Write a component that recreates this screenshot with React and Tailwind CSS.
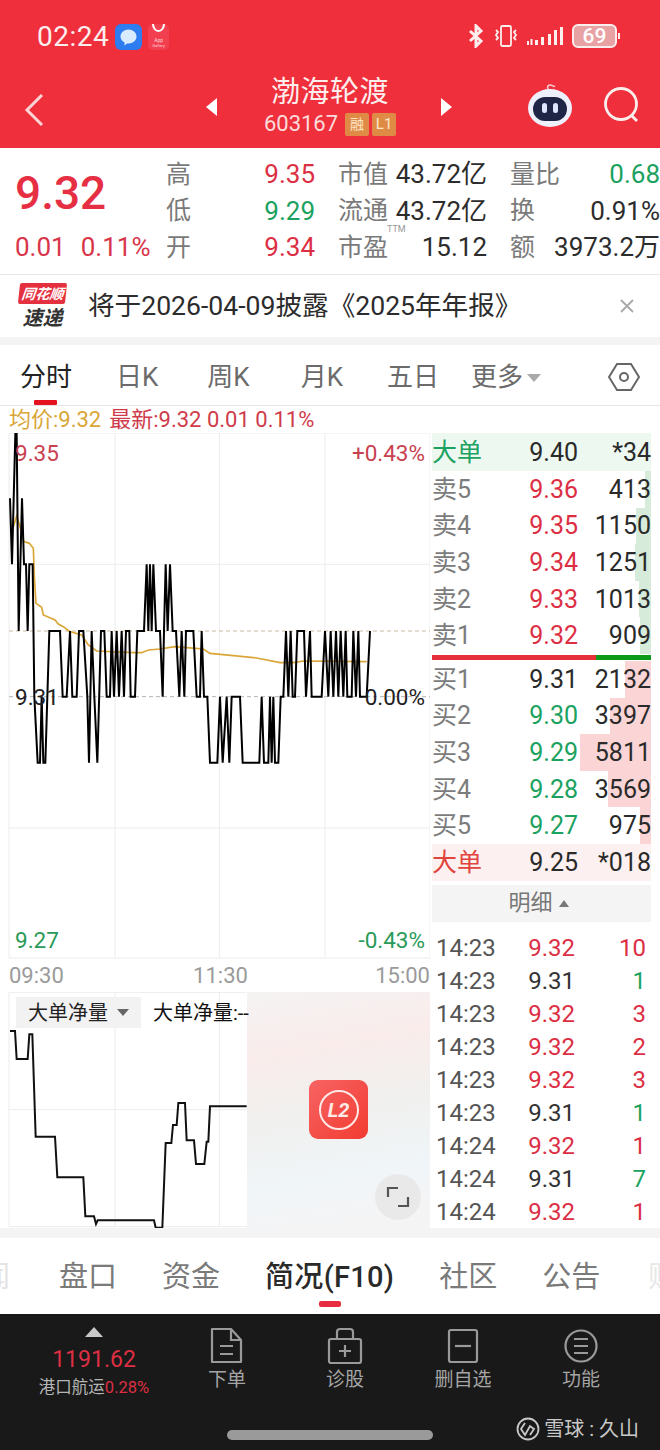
const FONT = { fontFamily: 'Roboto, "Noto Sans CJK SC", sans-serif' };
const L = { a: 12, b: 205, c: 403, d: 603, e: 800, f: 998 };
const priceRaw = "30b 36c 46a 50a 56d 66b 72c 78c 83d 88c 98c 103e 113f 120f 125e 130f 136f 148d 180d 188e 200e 210d 217e 230e 237d 250d 262e 267f 275d 283e 292f 303d 313d 320e 330e 335d 342e 350d 357e 365d 372e 378d 388d 392e 405e 412d 432d 440c 445d 450c 455d 460c 468d 480d 488e 492d 497c 503d 510c 518d 528d 538e 545d 553e 558d 572d 580d 590e 600e 605d 612e 622e 630f 652f 660e 668f 680e 688f 695e 720e 728f 735f 778f 785e 792f 805f 810e 815f 820e 825f 835f 842e 850e 858d 865e 872d 878e 885e 892d 912d 918e 930d 935e 965e 975d 985e 992d 1000e 1008d 1015e 1022d 1030e 1037d 1042e 1055e 1060d 1068e 1075d 1080e 1100e 1110d";
const pricePts = priceRaw.split(" ").map((s) => `${parseInt(s)},${L[s.slice(-1)]}`).join(" ");
const avgPts = "40,290 50,258 60,290 72,335 88,340 100,355 103,440 108,520 125,532 130,555 165,570 175,582 190,590 210,605 245,615 265,645 290,663 400,668 425,668 445,660 480,657 525,650 560,653 610,657 630,670 700,677 770,684 840,698 880,698 910,693 1100,695";
const flowPts = "30,213 45,213 50,297 83,297 88,223 97,223 107,530 165,530 172,652 250,652 256,769 282,769 288,792 293,781 462,781 467,803 487,803 497,549 514,549 519,495 530,495 535,429 555,429 560,541 582,541 588,612 613,612 620,545 625,545 630,439 740,439";

const quote = [
  [["高", "9.35", "text-[#dc2f44]"], ["市值", "43.72亿", "text-[#2c2c2c]"], ["量比", "0.68", "text-[#1ba260]"]],
  [["低", "9.29", "text-[#1ba260]"], ["流通", "43.72亿", "text-[#2c2c2c]"], ["换", "0.91%", "text-[#2c2c2c]"]],
  [["开", "9.34", "text-[#dc2f44]"], ["市盈", "15.12", "text-[#2c2c2c]"], ["额", "3973.2万", "text-[#2c2c2c]"]],
];
const sell = [["卖5", "9.36", "413", 6], ["卖4", "9.35", "1150", 15], ["卖3", "9.34", "1251", 16], ["卖2", "9.33", "1013", 12], ["卖1", "9.32", "909", 11]];
const buy = [["买1", "9.31", "2132", 26, "text-[#2a2a2a]"], ["买2", "9.30", "3397", 41, "text-[#1ba260]"], ["买3", "9.29", "5811", 71, "text-[#1ba260]"], ["买4", "9.28", "3569", 43, "text-[#1ba260]"], ["买5", "9.27", "975", 11, "text-[#1ba260]"]];
const ticks = [["9.32", "10", 1], ["9.31", "1", 0], ["9.32", "3", 1], ["9.32", "2", 1], ["9.32", "3", 1], ["9.31", "1", 0], ["9.32", "1", 1], ["9.31", "7", 0], ["9.32", "1", 1]];

function BookRow({ label, price, vol, bar, barCls, priceCls }) {
  return (
    <div className="relative flex h-[36.6px] items-center text-[25px] leading-none">
      <div className={`absolute right-0 top-0 h-full ${barCls}`} style={{ width: bar }} />
      <span className="relative w-[88px] text-[#7c7c7c]">{label}</span>
      <span className={`relative w-[58px] text-right ${priceCls}`}>{price}</span>
      <span className="relative flex-1 text-right text-[#2a2a2a]">{vol}</span>
    </div>
  );
}

function ActionItem({ icon, label }) {
  return (
    <div className="flex w-[118px] flex-col items-center">
      <svg width="36" height="38" viewBox="0 0 36 38" fill="none" stroke="#9a9a9a" strokeWidth="2.2">{icon}</svg>
      <span className="mt-[3px] text-[19px] leading-[24px] text-[#a5a5a5]">{label}</span>
    </div>
  );
}

export default function App() {
  return (
    <div className="flex h-[1450px] w-[660px] flex-col overflow-hidden bg-white" style={FONT}>
      {/* Red header */}
      <header className="h-[148px] shrink-0 bg-[#ef2f3b] text-white">
        <div className="flex h-[73px] items-start justify-between pl-[37px] pr-[40px] pt-[21px]">
          <div className="flex items-center">
            <span className="text-[28px] leading-[32px] tracking-[0.5px] text-[#fdeeee]">02:24</span>
            <div className="ml-[6px] flex h-[26px] w-[27px] items-center justify-center rounded-[6px] bg-[#2d7cf0]">
              <svg width="19" height="19" viewBox="0 0 19 19"><path d="M9.5 1.5c4.4 0 8 3 8 7s-3.6 7-8 7c-.5 0-1 0-1.500-.1l-2.500 2.100v-3C3 13.200 1.500 11 1.500 8.500c0-4 3.600-7 8-7z" fill="#d9ecff" /></svg>
            </div>
            <div className="relative ml-[6px] flex h-[26px] w-[21px] flex-col items-center justify-end rounded-[5px] bg-[#f23f4f] pb-[2px]">
              <svg className="absolute left-[4px] top-0" width="13" height="9" viewBox="0 0 13 9" fill="none" stroke="#fff" strokeWidth="2"><path d="M1 0c0 4 2.500 7 5.500 7S12 4 12 0" /></svg>
              <span className="text-[5px] leading-[6px] text-[#ffd9dc]">App</span>
              <span className="text-[4px] leading-[5px] text-[#ffd9dc]">Gallery</span>
            </div>
          </div>
          <div className="mt-[3px] flex items-center">
            <svg width="16" height="24" viewBox="0 0 16 24" fill="none" stroke="#fdeeee" strokeWidth="3"><path d="M2 7l11 10-5 5V2l5 5L2 17" /></svg>
            <svg className="ml-[9px]" width="26" height="24" viewBox="0 0 26 24" fill="none" stroke="#fdeeee" strokeWidth="1.800"><rect x="8" y="2" width="10" height="20" rx="1.500" /><path d="M3 6l2 2-2 3 2 3-2 2M23 6l-2 2 2 3-2 3 2 2" /></svg>
            <svg className="ml-[8px]" width="40" height="24" viewBox="0 0 40 24" fill="#fdeeee"><rect x="0" y="17" width="2" height="4" /><rect x="3.500" y="15" width="2" height="6" /><rect x="8" y="16" width="3" height="5" /><rect x="14" y="13" width="3" height="8" /><rect x="21" y="10" width="3" height="11" /><rect x="27" y="6" width="3" height="15" /><rect x="33" y="3" width="3" height="18" /></svg>
            <div className="ml-[5px] flex h-[24px] w-[45px] items-center justify-center rounded-[6px] border-2 border-[#fdeeee] bg-[#e8a2a4] text-[21px] font-medium leading-none text-white">69</div>
            <div className="ml-[1px] h-[6px] w-[2px] bg-[#fdeeee]" />
          </div>
        </div>
        <div className="flex h-[75px] items-start">
          <svg className="ml-[21px] mt-[19px]" width="26" height="36" viewBox="0 0 26 36" fill="none" stroke="#fbd5d5" strokeWidth="3"><path d="M21 3L6 18l15 15" /></svg>
          <div className="ml-[159px] mt-[25px] h-0 w-0 border-y-[9px] border-r-[11px] border-y-transparent border-r-white" />
          <div className="ml-[45px] flex w-[136px] flex-col items-center">
            <span className="whitespace-nowrap text-[29px] leading-[38px] tracking-[0.500px] text-[#fdeeee]">渤海轮渡</span>
            <div className="mt-[1px] flex items-center whitespace-nowrap">
              <span className="text-[22px] leading-[24px] text-[#fbdcdc]">603167</span>
              <span className="ml-[7px] flex h-[23px] w-[24px] items-center justify-center rounded-[2px] bg-[#e08b45] text-[14px] text-[#fde6c8]">融</span>
              <span className="ml-[3px] flex h-[23px] w-[24px] items-center justify-center rounded-[2px] bg-[#e08b45] text-[15px] text-[#fde6c8]">L1</span>
            </div>
          </div>
          <div className="ml-[43px] mt-[25px] h-0 w-0 border-y-[9px] border-l-[11px] border-y-transparent border-l-white" />
          <svg className="ml-[73px] mt-[6px]" width="50" height="50" viewBox="0 0 50 50">
            <path d="M24 11c-2-1-2-5 1-5s3 2 5 1" fill="none" stroke="#f8c9cf" strokeWidth="1.600" />
            <ellipse cx="25" cy="29" rx="22" ry="19" fill="#eef0fb" />
            <rect x="8" y="18" width="34" height="24" rx="12" fill="#1f2544" />
            <rect x="17" y="24" width="5" height="10" rx="2.500" fill="#dfe6ff" />
            <rect x="28" y="24" width="5" height="10" rx="2.500" fill="#dfe6ff" />
          </svg>
          <svg className="ml-[26px] mt-[11px]" width="44" height="44" viewBox="0 0 44 44" fill="none" stroke="#fdeeee" strokeWidth="2.800"><circle cx="20" cy="20" r="15.500" /><path d="M30 31l6 6" /></svg>
        </div>
      </header>

      {/* Quote */}
      <section className="flex h-[127px] shrink-0 border-b border-[#e8e8e8] pt-[8px]">
        <div className="w-[166px] shrink-0 pl-[15px]">
          <div className="mt-[12px] text-[46px] font-medium leading-[50px] text-[#e62f43]">9.32</div>
          <div className="mt-[14px] flex gap-[15px] text-[26px] leading-[30px] text-[#d93549]"><span>0.01</span><span>0.11%</span></div>
        </div>
        <div className="flex flex-1 flex-col">
          {quote.map((row, i) => (
            <div key={i} className="grid h-[36.5px] grid-cols-[149px_149px_150px] items-center gap-x-[23px] text-[26px] leading-none">
              {row.map(([k, v, c], j) => (
                <div key={j} className="flex items-center justify-between whitespace-nowrap">
                  <span className="relative text-[25px] text-[#7a7a7a]">{k}{k === "市盈" && <sup className="absolute left-[49px] top-[-6px] text-[9px] text-[#999]">TTM</sup>}</span>
                  <span className={c}>{v}</span>
                </div>
              ))}
            </div>
          ))}
        </div>
      </section>

      {/* Notice */}
      <section className="flex h-[62px] shrink-0 items-center pl-[19px]">
        <div className="flex w-[47px] flex-col items-center">
          <span className="flex h-[21px] w-[47px] -skew-x-6 items-center justify-center rounded-[2px] bg-[#e5303f] text-[14px] font-bold italic leading-none text-white">同花顺</span>
          <span className="mt-[3px] text-[20px] font-bold italic leading-[22px] text-[#333]">速递</span>
        </div>
        <span className="ml-[22px] whitespace-nowrap text-[26.6px] leading-none text-[#2c2c2c]">将于2026-04-09披露《2025年年报》</span>
        <svg className="ml-auto mr-[25px]" width="16" height="16" viewBox="0 0 16 16" stroke="#a8a8a8" strokeWidth="1.800"><path d="M2 2l12 12M14 2L2 14" /></svg>
      </section>
      <div className="h-[8px] shrink-0 bg-[#f4f4f4]" />

      {/* Chart tabs */}
      <nav className="relative flex h-[61px] shrink-0 items-center border-b border-[#e5e5e5] pt-[3px] text-[26px] leading-none text-[#6b6b6b]">
        <span className="absolute left-[20px] top-[19px] text-[#222]">分时</span>
        <span className="absolute bottom-[0px] left-[34px] h-[5px] w-[23px] rounded-[1px] bg-[#e5131f]" />
        <span className="ml-[116px]">日K</span>
        <span className="ml-[49px]">周K</span>
        <span className="ml-[51px]">月K</span>
        <span className="ml-[44px]">五日</span>
        <span className="ml-[32px]">更多</span>
        <span className="ml-[4px] mt-[3px] h-0 w-0 border-x-[7px] border-t-[8px] border-x-transparent border-t-[#aaa]" />
        <svg className="ml-auto mr-[20px]" width="32" height="32" viewBox="0 0 32 32" fill="none" stroke="#666" strokeWidth="2"><path d="M9 3h14l8 13-8 13H9L1 16z" /><circle cx="16" cy="16" r="4" /></svg>
      </nav>

      {/* Info line */}
      <div className="flex h-[27px] shrink-0 items-center pl-[9px] text-[22px] leading-none">
        <span className="text-[#d9a637]">均价:9.32</span>
        <span className="ml-[8px] text-[#cf3b4a]">最新:9.32 0.01 0.11%</span>
      </div>

      {/* Main */}
      <main className="flex h-[795px] shrink-0">
        <div className="w-[430px] shrink-0">
          <div className="relative h-[527px]">
            <svg className="absolute inset-0" width="430" height="527" viewBox="0 9 1290 1581" fill="none">
              <path d="M27 9V1584H1290V9H27M345 9V1584M658 9V1584M975 9V1584M27 403H1290M27 1194H1290" stroke="#ececec" strokeWidth="3" />
              <path d="M27 603H1290" stroke="#c9b9a0" strokeWidth="3" strokeDasharray="12 9" />
              <path d="M27 800H1290" stroke="#b5b5b5" strokeWidth="3" strokeDasharray="12 9" />
              <polyline points={avgPts} stroke="#d9a637" strokeWidth="5" />
              <polyline points={pricePts} stroke="#000" strokeWidth="6" strokeLinejoin="miter" />
            </svg>
            <span className="absolute left-[15px] top-[8px] text-[22.5px] leading-[24px] text-[#c8414f]">9.35</span>
            <span className="absolute right-[5px] top-[8px] text-[22.5px] leading-[24px] text-[#c8414f]">+0.43%</span>
            <span className="absolute left-[15px] top-[252px] text-[22.5px] leading-[24px] text-[#222]">9.31</span>
            <span className="absolute right-[5px] top-[252px] text-[22.5px] leading-[24px] text-[#222]">0.00%</span>
            <span className="absolute left-[15px] top-[495px] text-[22.5px] leading-[24px] text-[#2a9a58]">9.27</span>
            <span className="absolute right-[5px] top-[495px] text-[22.5px] leading-[24px] text-[#2a9a58]">-0.43%</span>
          </div>
          <div className="flex h-[32px] items-center justify-between pl-[9px] text-[22px] leading-none text-[#9a9a9a]">
            <span>09:30</span><span className="mr-[-2px]">11:30</span><span>15:00</span>
          </div>
          <div className="relative h-[236px] overflow-hidden">
            <svg className="absolute inset-0" width="430" height="236" viewBox="0 96 1290 708" fill="none">
              <path d="M27 96V800H740M27 97H740M345 96V800M658 96V800M27 449H740" stroke="#ececec" strokeWidth="3" />
              <polyline points={flowPts} stroke="#111" strokeWidth="6" />
            </svg>
            <div className="absolute left-[16px] top-[5px] flex h-[31px] w-[125px] items-center bg-[#f2f2f2] pl-[12px] text-[20px] leading-none text-[#222]">
              大单净量
              <span className="ml-[9px] h-0 w-0 border-x-[6px] border-t-[7px] border-x-transparent border-t-[#666]" />
            </div>
            <div className="absolute bottom-0 left-[247px] right-0 top-0 flex items-center justify-center bg-[linear-gradient(170deg,#f5f3f3_0%,#f9eceb_25%,#f0f0ee_50%,#f0f5f8_75%,#f6f4f4_100%)]">
              <div className="mt-[-1px] flex h-[59px] w-[59px] items-center justify-center rounded-[9px] bg-[linear-gradient(135deg,#f76464,#f23b30)]">
                <div className="flex h-[40px] w-[40px] items-center justify-center rounded-full border-[2px] border-[#ffe9e6] text-[20px] font-bold italic leading-none text-[#ffe9e6]">L2</div>
              </div>
              <div className="absolute bottom-[8px] right-[9px] flex h-[46px] w-[46px] items-center justify-center rounded-full bg-[#e9e9e9]">
                <svg width="24" height="24" viewBox="0 0 24 24" fill="none" stroke="#555" strokeWidth="2.200"><path d="M2 12V3h10M22 12v9H12" /></svg>
              </div>
            </div>
            <span className="absolute left-[153px] top-[9px] whitespace-nowrap text-[20px] leading-[24px] text-[#111]">大单净量:--</span>
          </div>
        </div>

        {/* Right column */}
        <div className="w-[221px] shrink-0 pl-[2px]">
          <div className="flex h-[38px] items-center bg-[#edf8f0] text-[25px] leading-none">
            <span className="w-[88px] text-[#1ba260]">大单</span>
            <span className="w-[58px] text-right text-[#2a2a2a]">9.40</span>
            <span className="flex-1 text-right text-[#2a2a2a]">*34</span>
          </div>
          {sell.map(([a, b, c, w]) => (
            <BookRow key={a} label={a} price={b} vol={c} bar={w} barCls="bg-[#d6ebd9]" priceCls="text-[#dc2f44]" />
          ))}
          <div className="mb-[1px] mt-[1px] flex h-[5px] bg-[#e5303a]">
            <div className="ml-auto h-full w-[55px] bg-[#0e9a19]" />
          </div>
          {buy.map(([a, b, c, w, pc]) => (
            <BookRow key={a} label={a} price={b} vol={c} bar={w} barCls="bg-[#fbd5d5]" priceCls={pc} />
          ))}
          <div className="flex h-[37px] items-center bg-[#fdf0f0] text-[25px] leading-none">
            <span className="w-[88px] text-[#e0443c]">大单</span>
            <span className="w-[58px] text-right text-[#2a2a2a]">9.25</span>
            <span className="flex-1 text-right text-[#2a2a2a]">*018</span>
          </div>
          <div className="mt-[4px] flex h-[37px] items-center justify-center bg-[#f4f4f4] pr-[6px] text-[22px] leading-none text-[#777]">
            明细
            <span className="ml-[6px] h-0 w-0 border-x-[5px] border-b-[7px] border-x-transparent border-b-[#777]" />
          </div>
          <div className="pt-[10px]">
            {ticks.map(([p, v, up], i) => (
              <div key={i} className="flex h-[33px] items-center pl-[4px] text-[24px] leading-none">
                <span className="w-[81px] text-[#555]">{i > 5 ? "14:24" : "14:23"}</span>
                <span className={`w-[58px] text-right ${up ? "text-[#dc2f44]" : "text-[#333]"}`}>{p}</span>
                <span className={`flex-1 pr-[5px] text-right ${up ? "text-[#dc2f44]" : "text-[#1ba260]"}`}>{v}</span>
              </div>
            ))}
          </div>
        </div>
      </main>

      <div className="h-[10px] shrink-0 bg-[#f4f4f4]" />

      {/* Bottom tabs */}
      <nav className="relative flex h-[76px] shrink-0 items-start overflow-hidden pt-[19px] text-[29px] leading-[40px] text-[#7a7a7a]">
        <span className="absolute left-[-19px] top-[19px] text-[#e4e4e4]">闻</span>
        <span className="ml-[59px]">盘口</span>
        <span className="ml-[45px]">资金</span>
        <span className="ml-[45px] font-medium tracking-[0.300px] text-[#2a2a2a]">简况(F10)</span>
        <span className="ml-[45px]">社区</span>
        <span className="ml-[45px]">公告</span>
        <span className="absolute left-[648px] top-[19px] text-[#e8e8e8]">财</span>
        <span className="absolute bottom-[7px] left-[319px] h-[6px] w-[22px] rounded-[2px] bg-[#e82d42]" />
      </nav>

      {/* Dark bar */}
      <footer className="relative flex-1 bg-[#191919]">
        <div className="flex items-start pl-[29px] pt-[13px]">
          <div className="flex w-[130px] flex-col items-center">
            <span className="h-0 w-0 border-x-[9px] border-b-[10px] border-x-transparent border-b-[#c9c9c9]" />
            <span className="mt-[9px] text-[23px] leading-[28px] text-[#dd2f43]">1191.62</span>
            <span className="mt-[3px] whitespace-nowrap text-[16.5px] leading-[22px] text-[#b5b5b5]">港口航运<span className="text-[#dd2f43]">0.28%</span></span>
          </div>
          <div className="ml-[9px] flex">
            <ActionItem label="下单" icon={<><path d="M3 2h19l10 11v22H3z" strokeLinejoin="round" /><path d="M22 2v11h10M11 19h13M11 27h13" /></>} />
            <ActionItem label="诊股" icon={<><rect x="2" y="12" width="32" height="24" rx="2" /><path d="M10 12V5a3 3 0 0 1 3-3h10a3 3 0 0 1 3 3v7M18 18v12M12 24h12" /></>} />
            <ActionItem label="删自选" icon={<><rect x="4" y="3" width="28" height="32" rx="2" /><path d="M10 19h16" /></>} />
            <ActionItem label="功能" icon={<><circle cx="18" cy="19" r="15.500" /><path d="M11 12h14M11 19h14M11 26h14" /></>} />
          </div>
        </div>
        <div className="absolute bottom-[9px] right-[21px] flex items-center whitespace-nowrap text-[20px] leading-none text-[#c9c9c9]">
          <svg width="24" height="24" viewBox="0 0 24 24" fill="none" stroke="#c9c9c9" strokeWidth="1.800"><circle cx="12" cy="12" r="10.500" /><path d="M9 6l-4 6 4 6 5-9 4 3-4 6" /></svg>
          <span className="ml-[4px]">雪球 : 久山</span>
        </div>
        <div className="absolute bottom-[10px] left-[227px] h-[10px] w-[206px] rounded-full bg-[#9a9a9a]" />
      </footer>
    </div>
  );
}
